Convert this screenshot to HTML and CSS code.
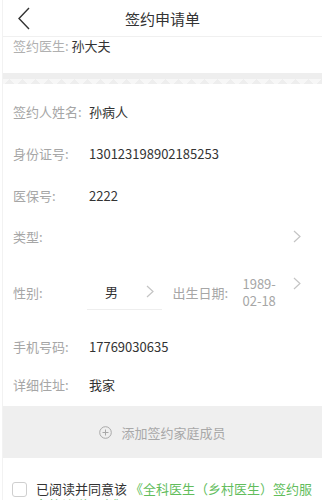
FILE: index.html
```html
<!DOCTYPE html>
<html>
<head>
    <meta charset="utf-8">
    <meta name="viewport" content="width=device-width, initial-scale=1">
    <title>签约申请单</title>
    <link rel="stylesheet" href="styles.css">
</head>
<body>
    <div class="page">
        <div class="header">
            <span class="back">
                <svg width="12" height="23" viewBox="0 0 12 23"><path d="M11 1 L1 11.5 L11 22" fill="none" stroke="#333" stroke-width="1.4"/></svg>
            </span>
            <h1>签约申请单</h1>
        </div>

        <div class="doctor">
            <span class="label">签约医生:</span> <span class="value">孙大夫</span>
        </div>

        <div class="band"></div>

        <div class="form">
            <div class="row r42">
                <span class="label">签约人姓名:</span>
                <span class="value">孙病人</span>
            </div>
            <div class="row r42">
                <span class="label">身份证号:</span>
                <span class="value">130123198902185253</span>
            </div>
            <div class="row r42">
                <span class="label">医保号:</span>
                <span class="value">2222</span>
            </div>
            <div class="row r40">
                <span class="label">类型:</span>
                <span class="value"></span>
                <svg class="arrow" width="8" height="13" viewBox="0 0 8 13"><path d="M1 1 L7 6.5 L1 12" fill="none" stroke="#c4c4c4" stroke-width="1.2"/></svg>
            </div>
            <div class="row r72">
                <span class="label short">性别:</span>
                <div class="sex">
                    <span>男</span>
                    <svg width="8" height="13" viewBox="0 0 8 13"><path d="M1 1 L7 6.5 L1 12" fill="none" stroke="#c4c4c4" stroke-width="1.2"/></svg>
                </div>
                <span class="label birth">出生日期:</span>
                <span class="date">1989-<br>02-18</span>
                <svg class="arrow top" width="8" height="13" viewBox="0 0 8 13"><path d="M1 1 L7 6.5 L1 12" fill="none" stroke="#c4c4c4" stroke-width="1.2"/></svg>
            </div>
            <div class="row r36">
                <span class="label">手机号码:</span>
                <span class="value">17769030635</span>
            </div>
            <div class="row r40">
                <span class="label">详细住址:</span>
                <span class="value">我家</span>
            </div>
        </div>

        <div class="add">
            <svg width="13" height="13" viewBox="0 0 13 13"><circle cx="6.5" cy="6.5" r="5.8" fill="none" stroke="#a8a8a8" stroke-width="1"/><path d="M6.5 3.5 V9.5 M3.5 6.5 H9.5" stroke="#a8a8a8" stroke-width="1"/></svg>
            <span>添加签约家庭成员</span>
        </div>

        <div class="agree">
            <span class="check"></span>
            <p>已阅读并同意该 <span class="link">《全科医生（乡村医生）签约服务协议说明书》</span></p>
        </div>
    </div>
</body>
</html>
```

FILE: styles.css
```css
* {
    margin: 0;
    padding: 0;
    box-sizing: border-box;
}

html,
body {
    width: 100%;
    height: 100%;
    background: #fff;
    overflow: hidden;
}

body {
    font-family: "Noto Sans CJK SC", "Noto Sans", sans-serif;
    font-size: 13px;
    color: #333;
}

.page {
    border-left: 1px solid #f2f2f2;
    margin-left: 2px;
}

.header {
    position: relative;
    height: 37px;
    border-bottom: 1px solid #f0f0f0;
    display: flex;
    align-items: center;
    justify-content: center;
}

.header h1 {
    font-size: 15px;
    font-weight: normal;
    color: #333;
}

.back {
    position: absolute;
    left: 15px;
    top: 7px;
}

.doctor {
    height: 36px;
    padding: 0 10px;
    line-height: 18px;
}

.doctor .label {
    color: #b0b0b0;
}

.band {
    height: 11px;
    background-color: #eeeeee;
    background-image: linear-gradient(135deg, #f7f7f7 35%, transparent 35%),
        linear-gradient(225deg, #f7f7f7 35%, transparent 35%);
    background-size: 13px 5px;
    background-position: 0 100%, 0 100%;
    background-repeat: repeat-x;
}

.form {
    padding-top: 6px;
}

.row {
    display: flex;
    align-items: center;
    padding: 0 10px;
}

.r42 { height: 42px; }
.r40 { height: 40px; }
.r36 { height: 36px; }
.r72 { height: 72px; }

.label {
    color: #a6a6a6;
    width: 76px;
    flex-shrink: 0;
}

.label.short {
    width: 74px;
}

.value {
    flex: 1;
    color: #333;
}

.arrow {
    margin-right: 11px;
}

.arrow.top {
    margin-top: -17px;
    margin-left: 11px;
}

.sex {
    width: 76px;
    height: 36px;
    border-bottom: 1px solid #eeeeee;
    display: flex;
    align-items: center;
    padding-left: 18px;
}

.sex span {
    width: 41px;
    color: #333;
}

.birth {
    margin-left: 10px;
    width: 70px;
}

.date {
    color: #a6a6a6;
    line-height: 17px;
    width: 40px;
}

.add {
    height: 52px;
    margin-top: 2px;
    background: #efefef;
    display: flex;
    align-items: center;
    justify-content: center;
    color: #a8a8a8;
}

.add svg {
    margin-right: 9px;
}

.agree {
    display: flex;
    align-items: flex-start;
    padding: 23px 10px 0 9px;
}

.check {
    width: 15px;
    height: 15px;
    border: 1px solid #cfcfcf;
    border-radius: 3px;
    margin-top: 1px;
    flex-shrink: 0;
}

.agree p {
    margin-left: 9px;
    line-height: 16px;
    width: 278px;
    color: #333;
}

.link {
    color: #62bd5c;
}
```
